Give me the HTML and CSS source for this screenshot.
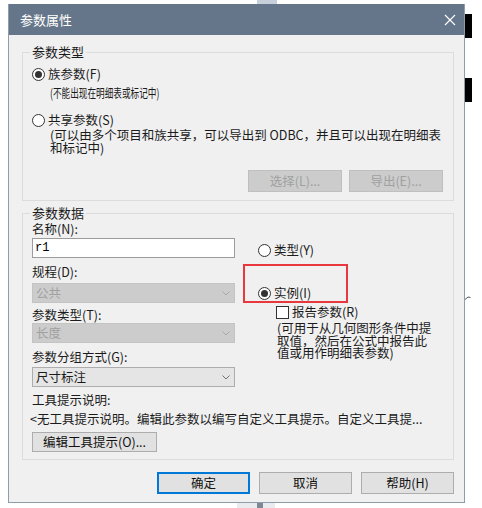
FILE: index.html
```html
<!DOCTYPE html>
<html lang="zh-CN">
  <head>
    <meta charset="UTF-8" />
    <meta name="viewport" content="width=device-width, initial-scale=1.0" />
    <title>参数属性</title>
    <link rel="stylesheet" href="styles.css">
  </head>
  <body>
    <div class="scrap-top"></div>
    <div class="screen">
      <div class="dialog">
        <div class="titlebar">
          <span class="title">参数属性</span>
          <svg class="close" width="12" height="12" viewBox="0 0 12 12"><path d="M1 1L11 11M11 1L1 11" stroke="#fff" stroke-width="1.1" fill="none"/></svg>
        </div>
        <div class="body">
          <!-- 参数类型 -->
          <div class="group group-type">
            <div class="legend">参数类型</div>
            <div class="radio-row first"><span class="radio checked"></span>族参数(F)</div>
            <p class="hint narrow">(不能出现在明细表或标记中)</p>
            <div class="radio-row second"><span class="radio"></span>共享参数(S)</div>
            <p class="hint wide">(可以由多个项目和族共享，可以导出到 ODBC，并且可以出现在明细表<br>和标记中)</p>
            <div class="btn-row">
              <button class="btn" disabled>选择(L)...</button>
              <button class="btn" disabled>导出(E)...</button>
            </div>
          </div>

          <!-- 参数数据 -->
          <div class="group group-data">
            <div class="legend">参数数据</div>
            <div class="cols">
              <div class="left">
                <div class="label">名称(N):</div>
                <div class="input">r1</div>
                <div class="label l-disc">规程(D):</div>
                <div class="select disabled s-disc">公共<svg width="8" height="5" viewBox="0 0 8 5"><path d="M0.5 0.5L4 4L7.5 0.5" stroke="#a8a8a8" fill="none"/></svg></div>
                <div class="label l-type">参数类型(T):</div>
                <div class="select disabled">长度<svg width="8" height="5" viewBox="0 0 8 5"><path d="M0.5 0.5L4 4L7.5 0.5" stroke="#a8a8a8" fill="none"/></svg></div>
                <div class="label l-group">参数分组方式(G):</div>
                <div class="select s-group">尺寸标注<svg width="8" height="5" viewBox="0 0 8 5"><path d="M0.5 0.5L4 4L7.5 0.5" stroke="#707070" fill="none"/></svg></div>
              </div>
              <div class="right">
                <div class="radio-row r-type"><span class="radio"></span>类型(Y)</div>
                <div class="mark">
                  <div class="radio-row"><span class="radio checked"></span>实例(I)</div>
                </div>
                <div class="check-row"><span class="check"></span>报告参数(R)</div>
                <p class="report-hint">(可用于从几何图形条件中提<br>取值，然后在公式中报告此<br>值或用作明细表参数)</p>
              </div>
            </div>
            <div class="label l-tip">工具提示说明:</div>
            <div class="tip-text">&lt;无工具提示说明。编辑此参数以编写自定义工具提示。自定义工具提...</div>
            <button class="btn btn-tip">编辑工具提示(O)...</button>
          </div>

          <div class="footer">
            <button class="btn default">确定</button>
            <button class="btn">取消</button>
            <button class="btn">帮助(H)</button>
          </div>
        </div>
      </div>
      <div class="side">
        <span class="bar"></span>
        <span class="bar bar2"></span>
        <svg class="tick" width="6" height="4" viewBox="0 0 6 4"><path d="M0 3.5L3 1L5.5 1.5" stroke="#555" fill="none"/></svg>
      </div>
    </div>
    <div class="scrap-bottom"><span class="pale"></span><span class="dark"></span><span class="pale"></span></div>
  </body>
</html>
```

FILE: styles.css
```css
* {
  box-sizing: border-box;
}
body {
  margin: 0;
  background: #fff;
  font: 12.5px/16px "Noto Sans CJK SC", sans-serif;
  color: #1b1b1b;
}
p {
  margin: 0;
}
.scrap-top {
  width: 20px;
  height: 4px;
  margin-left: 257px;
  background: #c7d0da;
}
.screen {
  display: flex;
  padding-left: 8px;
}

/* 对话框 */
.dialog {
  width: 457px;
  border: 1px solid #8e9cac;
  border-top: none;
  background: #f0f0f0;
}
.titlebar {
  height: 31px;
  display: flex;
  align-items: center;
  justify-content: space-between;
  padding: 0 8px 0 11px;
  background: #66768a;
  color: #fff;
  font-size: 13px;
}
.body {
  padding: 17px 10px 8px 13px;
}
.group {
  border: 1px solid #dcdcdc;
  padding: 0 10px 8px 9px;
}
.legend {
  display: table;
  margin: -9px 0 0 -2px;
  padding: 0 2px;
  background: #f0f0f0;
  font-size: 13px;
  line-height: 16px;
}

/* radio / checkbox */
.radio-row,
.check-row {
  display: flex;
  align-items: center;
  gap: 3px;
  height: 16px;
}
.radio {
  width: 13px;
  height: 13px;
  border: 1px solid #333;
  border-radius: 50%;
  background: #fff;
  display: flex;
  align-items: center;
  justify-content: center;
}
.radio.checked::after {
  content: "";
  width: 7px;
  height: 7px;
  border-radius: 50%;
  background: #333;
}
.check {
  width: 13px;
  height: 13px;
  border: 1px solid #333;
  background: #fff;
}

.group-type .first {
  margin-top: 6px;
}
.hint {
  margin: 3px 0 0 18px;
}
.narrow {
  white-space: nowrap;
  transform: scaleX(0.69);
  transform-origin: left;
}
.group-type .second {
  margin-top: 11px;
}
.hint.wide {
  margin-top: 0;
  line-height: 13px;
  white-space: nowrap;
}

/* 按钮 */
.btn {
  font: inherit;
  height: 22px;
  padding: 0;
  background: #e1e1e1;
  border: 1px solid #adadad;
  color: #111;
}
.btn:disabled {
  background: #cccccc;
  border-color: #bfbfbf;
  color: #a0a0a0;
}
.btn-row {
  display: flex;
  justify-content: flex-end;
  gap: 7px;
  margin-top: 16px;
}
.btn-row .btn {
  width: 94px;
}

/* 参数数据 */
.group-data {
  margin-top: 12px;
  padding-bottom: 7px;
}
.cols {
  display: grid;
  grid-template-columns: 203px 1fr;
  column-gap: 8px;
}
.label {
  line-height: 16px;
}
.input {
  height: 20px;
  margin-top: 1px;
  padding-left: 2px;
  background: #fff;
  border: 1px solid #9c9c9c;
  font: 12px/18px "Liberation Mono", monospace;
  color: #000;
}
.select {
  height: 20px;
  display: flex;
  align-items: center;
  justify-content: space-between;
  padding: 0 4px 0 3px;
  background: #e5e5e5;
  border: 1px solid #adadad;
}
.select.disabled {
  background: #cccccc;
  border-color: #c4c4c4;
  color: #a0a0a0;
}
.l-disc {
  margin-top: 6px;
}
.s-disc {
  margin-top: 3px;
}
.l-type {
  margin-top: 4px;
}
.l-group {
  margin-top: 6px;
}
.s-group {
  margin-top: 2px;
}

.r-type {
  margin-top: 21px;
  padding-left: 15px;
}
.mark {
  width: 105px;
  height: 39px;
  margin-top: 6px;
  padding: 19px 0 0 13px;
  border: 2px solid #e8383d;
}
.check-row {
  margin-top: 1px;
  padding-left: 33px;
}
.report-hint {
  margin: 2px 0 0 34px;
  line-height: 12.5px;
  white-space: nowrap;
}

.l-tip {
  margin-top: 5px;
}
.tip-text {
  margin: 3px 0 0 -2px;
  white-space: nowrap;
}
.btn-tip {
  display: block;
  width: 125px;
  height: 20px;
  margin-top: 5px;
}

.footer {
  display: flex;
  justify-content: flex-end;
  gap: 9px;
  margin-top: 12px;
}
.footer .btn {
  width: 93px;
}
.footer .default {
  border: 2px solid #0078d7;
}

/* 右边的残影 */
.side {
  display: flex;
  flex-direction: column;
  align-items: flex-start;
  padding-top: 10px;
}
.bar {
  width: 7px;
  height: 24px;
  background: #000;
}
.bar2 {
  margin-top: 40px;
}
.tick {
  margin-top: 194px;
}
.scrap-bottom {
  display: flex;
  height: 5px;
  margin-left: 237px;
}
.scrap-bottom .pale {
  width: 20px;
  background: #e9ebee;
}
.scrap-bottom .dark {
  width: 6px;
  background: #7d8894;
}
.scrap-bottom .pale:last-child {
  width: 12px;
}
```
